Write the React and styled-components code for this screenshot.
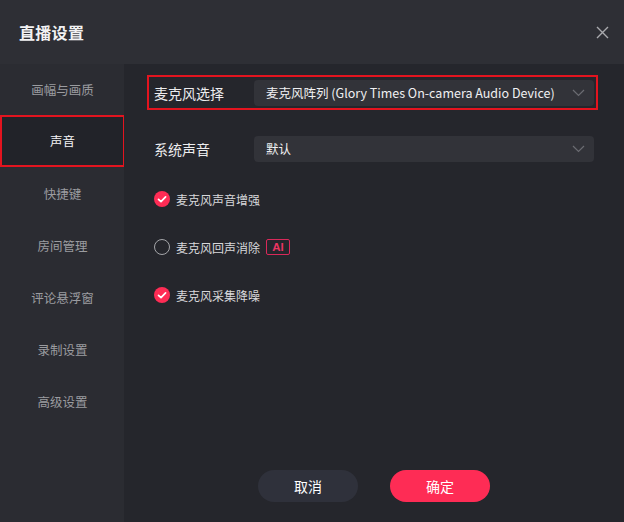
import React from "react";
import styled, { createGlobalStyle } from "styled-components";

const GlobalStyle = createGlobalStyle`
  html, body {
    margin: 0;
    padding: 0;
    background: #25262c;
  }
  * {
    box-sizing: border-box;
  }
`;

const menu = ["画幅与画质", "声音", "快捷键", "房间管理", "评论悬浮窗", "录制设置", "高级设置"];

const options = [
  { label: "麦克风声音增强", checked: true },
  { label: "麦克风回声消除", checked: false, ai: true },
  { label: "麦克风采集降噪", checked: true },
];

function Chevron() {
  return (
    <svg width="13" height="8" viewBox="0 0 13 8">
      <path d="M1 1 L6.5 6.5 L12 1" fill="none" stroke="#6b6c72" strokeWidth="1.2" />
    </svg>
  );
}

function Check({ checked }) {
  if (!checked) return <EmptyCircle />;
  return (
    <svg width="16" height="16" viewBox="0 0 16 16">
      <circle cx="8" cy="8" r="8" fill="#fe2c55" />
      <path d="M4.5 8.3 L7 10.6 L11.6 5.9" fill="none" stroke="#fff" strokeWidth="1.7" strokeLinecap="round" strokeLinejoin="round" />
    </svg>
  );
}

function App() {
  return (
    <>
      <GlobalStyle />
      <Dialog>
        <Header>
          <Title>直播设置</Title>
          <Close>
            <svg width="13" height="13" viewBox="0 0 13 13">
              <path d="M1 1 L12 12 M12 1 L1 12" stroke="#a9aaae" strokeWidth="1.4" />
            </svg>
          </Close>
        </Header>
        <Body>
          <Sidebar>
            {menu.map((m) => (
              <MenuItem key={m} $active={m === "声音"}>
                {m}
              </MenuItem>
            ))}
          </Sidebar>
          <Main>
            <Row $highlight>
              <Label>麦克风选择</Label>
              <Select>
                <span>麦克风阵列 (Glory Times On-camera Audio Device)</span>
                <Chevron />
              </Select>
            </Row>
            <Row>
              <Label>系统声音</Label>
              <Select>
                <span>默认</span>
                <Chevron />
              </Select>
            </Row>
            <Options>
              {options.map((o) => (
                <Option key={o.label}>
                  <Check checked={o.checked} />
                  <span>{o.label}</span>
                  {o.ai && <Badge>AI</Badge>}
                </Option>
              ))}
            </Options>
            <Footer>
              <Button>取消</Button>
              <Button $primary>确定</Button>
            </Footer>
          </Main>
        </Body>
      </Dialog>
    </>
  );
}

export default App;

const Dialog = styled.div`
  width: 624px;
  height: 522px;
  display: flex;
  flex-direction: column;
  font-family: "Noto Sans CJK SC", "Noto Sans", sans-serif;
  color: #e6e6e8;
  overflow: hidden;
`;

const Header = styled.div`
  height: 64px;
  flex-shrink: 0;
  background: #2e2f35;
  display: flex;
  align-items: center;
  justify-content: space-between;
  padding: 0 15px 0 19px;
`;

const Title = styled.div`
  font-size: 16px;
  font-weight: 700;
  color: #f2f2f3;
  letter-spacing: 0.3px;
`;

const Close = styled.div`
  width: 13px;
  height: 13px;
  display: flex;
`;

const Body = styled.div`
  flex: 1;
  display: flex;
`;

const Sidebar = styled.div`
  width: 124px;
  background: #2b2c32;
  display: flex;
  flex-direction: column;
`;

const MenuItem = styled.div`
  height: 52px;
  width: 125px;
  display: flex;
  align-items: center;
  justify-content: center;
  font-size: 12.5px;
  padding-bottom: 1px;
  color: ${(p) => (p.$active ? "#f4f4f5" : "#9b9ca0")};
  background: ${(p) => (p.$active ? "#222329" : "transparent")};
  border: 2px solid ${(p) => (p.$active ? "#e3141f" : "transparent")};
  margin-top: ${(p) => (p.$active ? "-1px" : "0")};
  margin-bottom: ${(p) => (p.$active ? "1px" : "0")};
`;

const Main = styled.div`
  flex: 1;
  background: #25262c;
  display: flex;
  flex-direction: column;
  padding: 11px 26px 20px 23px;
`;

const Row = styled.div`
  height: 35px;
  display: flex;
  align-items: center;
  padding: 2px 2px 2px 5px;
  border: 2px solid ${(p) => (p.$highlight ? "#e3141f" : "transparent")};
  margin-bottom: 21px;
`;

const Label = styled.div`
  width: 100px;
  font-size: 14px;
  color: #ececee;
`;

const Select = styled.div`
  flex: 1;
  height: 26px;
  background: #323339;
  border-radius: 4px;
  display: flex;
  align-items: center;
  justify-content: space-between;
  padding: 0 9px 0 12px;
  font-size: 12.5px;
  color: #f0f0f2;
`;

const Options = styled.div`
  display: flex;
  flex-direction: column;
  gap: 24px;
  padding-left: 7px;
`;

const Option = styled.div`
  height: 24px;
  display: flex;
  align-items: center;
  gap: 6px;
  font-size: 12px;
  color: #d8d8db;
`;

const EmptyCircle = styled.div`
  width: 16px;
  height: 16px;
  border-radius: 50%;
  border: 1.5px solid #a4a5a9;
`;

const Badge = styled.div`
  height: 16px;
  width: 24px;
  border: 1.5px solid #d9295a;
  border-radius: 2px;
  color: #ec3562;
  font-size: 11.5px;
  font-weight: 700;
  font-family: "Liberation Sans", Arial, sans-serif;
  display: flex;
  align-items: center;
  justify-content: center;
`;

const Footer = styled.div`
  margin-top: auto;
  display: flex;
  justify-content: center;
  gap: 32px;
  padding-left: 3px;
`;

const Button = styled.div`
  width: 100px;
  height: 32px;
  border-radius: 16px;
  display: flex;
  align-items: center;
  justify-content: center;
  font-size: 14px;
  color: #fff;
  background: ${(p) => (p.$primary ? "#fe2c55" : "#2f313b")};
`;
